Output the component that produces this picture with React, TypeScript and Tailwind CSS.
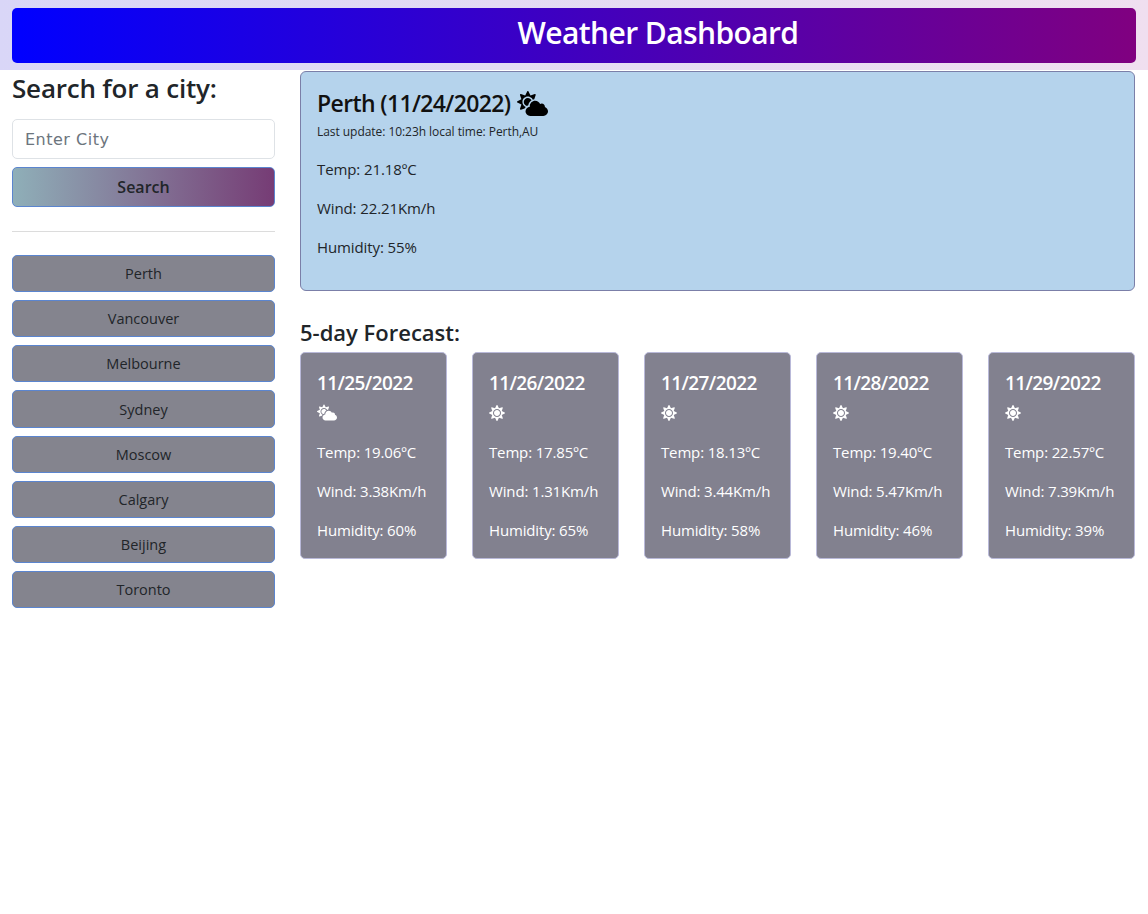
import { FaCloudSun, FaSun } from 'react-icons/fa';

const CITIES = ['Perth', 'Vancouver', 'Melbourne', 'Sydney', 'Moscow', 'Calgary', 'Beijing', 'Toronto'];

const FORECAST = [
  { date: '11/25/2022', cloudy: true, temp: '19.06', wind: '3.38', humidity: '60' },
  { date: '11/26/2022', cloudy: false, temp: '17.85', wind: '1.31', humidity: '65' },
  { date: '11/27/2022', cloudy: false, temp: '18.13', wind: '3.44', humidity: '58' },
  { date: '11/28/2022', cloudy: false, temp: '19.40', wind: '5.47', humidity: '46' },
  { date: '11/29/2022', cloudy: false, temp: '22.57', wind: '7.39', humidity: '39' },
];

export default function App() {
  return (
    <div className="min-h-[914px] bg-white font-['Open_Sans','Noto_Sans',sans-serif] text-[#212529]">
      {/* Header */}
      <header className="h-[70px] bg-[linear-gradient(to_right,#d9d6f7,#f0dff0)] px-3 pt-2">
        <div className="flex h-[55px] items-center justify-center rounded-[5px] bg-[linear-gradient(to_right,#0000ff,#800080)] pb-[6px] pl-[168px]">
          <h1 className="text-[30px] font-semibold tracking-[-0.6px] text-white">Weather Dashboard</h1>
        </div>
      </header>

      <div className="flex px-3">
        {/* Search sidebar */}
        <aside className="w-[263px] shrink-0">
          <h2 className="text-[26px] leading-[36px] font-semibold tracking-[-0.2px]">Search for a city:</h2>
          <input
            placeholder="Enter City"
            className="mt-[13px] h-[40px] w-full rounded-[5px] border border-[#dee2e6] px-3 font-['DejaVu_Sans',sans-serif] text-[16px] tracking-[0.5px] placeholder:text-[#6c757d]"
          />
          <button className="mt-2 h-[40px] w-full rounded-[5px] border border-[#5b85cf] bg-[linear-gradient(to_right,#8fafb8,#763c75)] text-[16px] font-semibold text-[#212529]">
            Search
          </button>
          <hr className="mt-[24px] mb-[23px] border-[#dcdcdc]" />
          <div className="flex flex-col gap-2">
            {CITIES.map((city) => (
              <button
                key={city}
                className="h-[37.14px] w-full rounded-[5px] border border-[#5b85cf] bg-[#84848e] pt-[1px] text-[14.5px] text-[#212529]"
              >
                {city}
              </button>
            ))}
          </div>
        </aside>

        {/* Weather */}
        <main className="mt-[1px] ml-[25px] w-[835px] shrink-0">
          <section className="h-[220px] rounded-[6px] border border-[#7b7fa8] bg-[#b5d3ec] px-4 pt-[15px] text-[#212529]">
            <div className="flex items-center gap-[7px]">
              <span className="text-[23px] leading-[32px] font-semibold tracking-[-0.63px] text-[#111]">Perth (11/24/2022)</span>
              <FaCloudSun className="h-[25px] w-[31px] text-black" />
            </div>
            <p className="mt-[4px] text-[12px] leading-[18px] tracking-[-0.05px]">Last update: 10:23h local time: Perth,AU</p>
            <div className="mt-[17px] flex flex-col gap-[16px] text-[15px] leading-[23px] tracking-[-0.1px]">
              <p>Temp: 21.18ºC</p>
              <p>Wind: 22.21Km/h</p>
              <p>Humidity: 55%</p>
            </div>
          </section>

          <h3 className="mt-[26px] text-[22px] leading-[30px] font-semibold">5-day Forecast:</h3>
          <div className="mt-[5px] flex justify-between">
            {FORECAST.map((day) => (
              <div
                key={day.date}
                className="h-[207px] w-[147px] rounded-[5px] border border-[#b9b9d9] bg-[#82818f] px-4 pt-[17px] text-white"
              >
                <div className="text-[19px] leading-[27px] font-semibold tracking-[-0.6px]">{day.date}</div>
                <div className="mt-[7px] flex h-[17px] items-center">
                  {day.cloudy ? <FaCloudSun className="h-[17px] w-[20px]" /> : <FaSun className="h-[16px] w-[16px]" />}
                </div>
                <div className="mt-[20px] flex flex-col gap-[16px] text-[15px] leading-[23px] tracking-[-0.15px]">
                  <p>Temp: {day.temp}ºC</p>
                  <p>Wind: {day.wind}Km/h</p>
                  <p>Humidity: {day.humidity}%</p>
                </div>
              </div>
            ))}
          </div>
        </main>
      </div>
    </div>
  );
}
